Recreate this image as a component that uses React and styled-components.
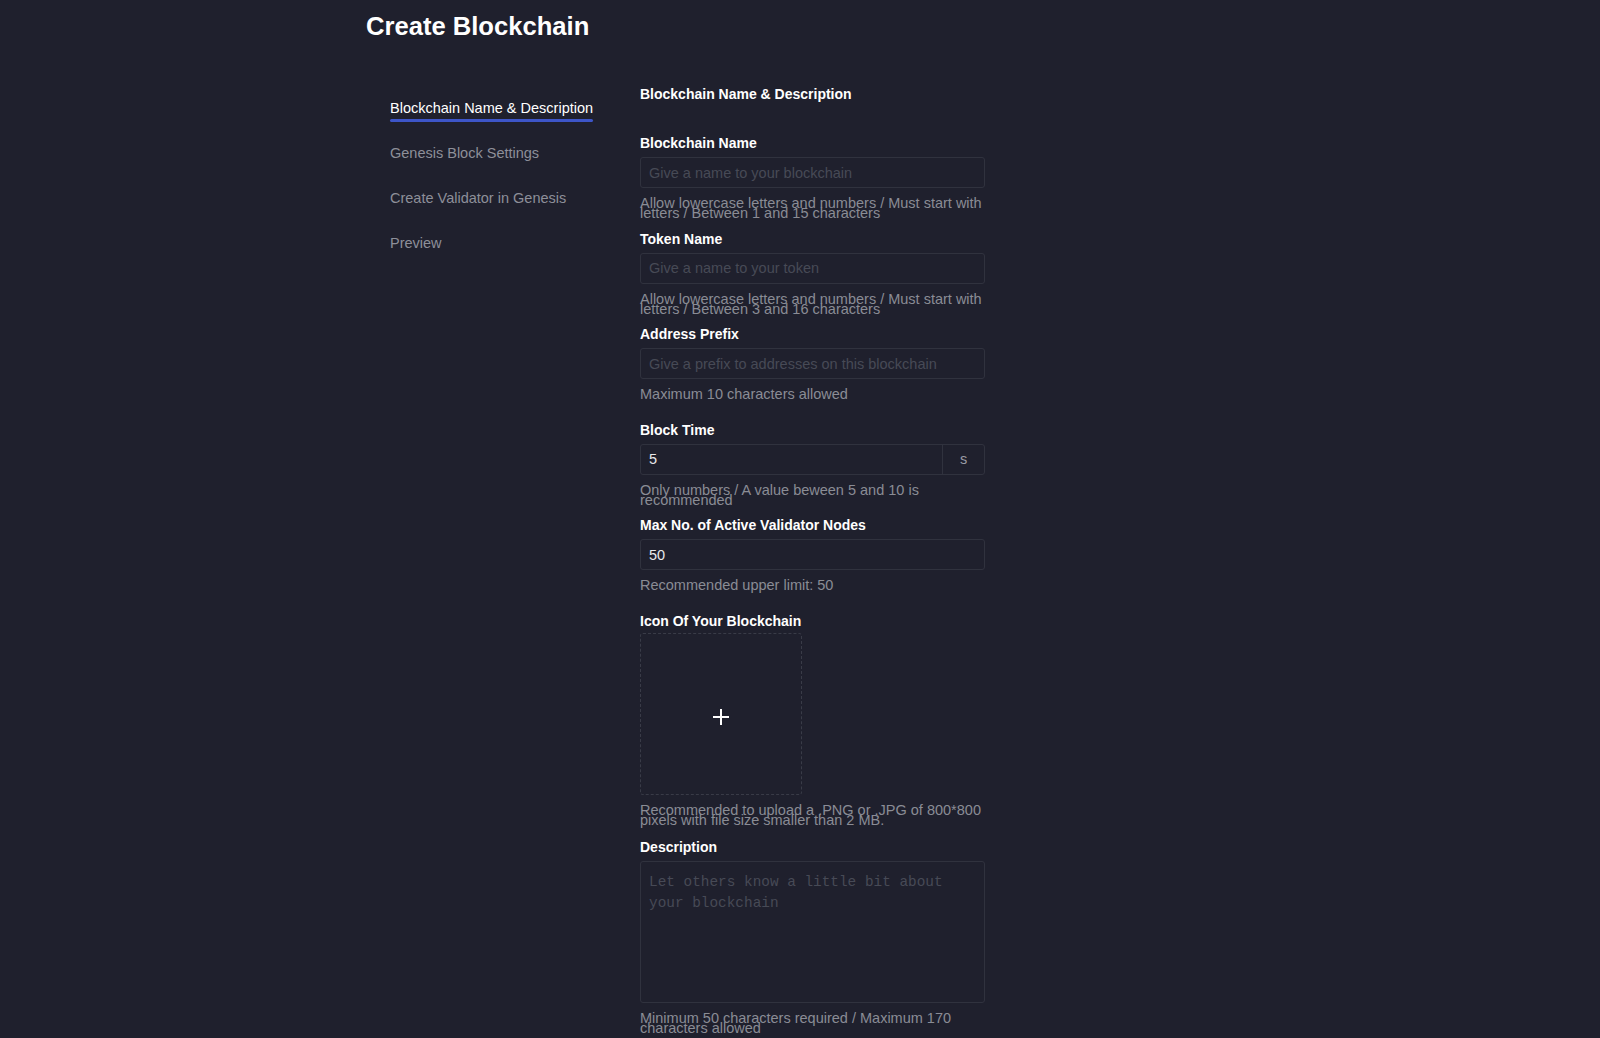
import React from 'react';
import styled, { createGlobalStyle } from 'styled-components';

const GlobalStyle = createGlobalStyle`
	html, body {
		margin: 0;
		padding: 0;
		background: #1f202d;
	}

	body {
		font-family: 'Liberation Sans', Arial, sans-serif;
		color: #fff;
		min-height: 1038px;
	}
`;

const STEPS = [
	'Blockchain Name & Description',
	'Genesis Block Settings',
	'Create Validator in Genesis',
	'Preview',
];

const Page = styled.div`
	width: 868px;
	margin: 0 auto;
`;

const Title = styled.h1`
	margin: 10px 0 0;
	font-size: 25.6px;
	line-height: 32px;
	font-weight: 700;
	color: #fff;
`;

const Body = styled.div`
	display: flex;
	margin-top: 44px;
	padding-left: 24px;
`;

const Sidebar = styled.nav`
	width: 250px;
	padding-top: 14px;
	display: flex;
	flex-direction: column;
	align-items: flex-start;
	gap: 23px;
`;

const Step = styled.div`
	display: flex;
	flex-direction: column;
	font-size: 14.5px;
	line-height: 17px;
	color: ${({ $active }) => ($active ? '#ffffff' : '#8d8f99')};
	cursor: pointer;
`;

const StepLine = styled.span`
	display: block;
	height: 3px;
	margin-top: 2px;
	border-radius: 2px;
	background: ${({ $active }) => ($active ? '#3d55c8' : 'transparent')};
`;

const Main = styled.div`
	width: 345px;
	display: flex;
	flex-direction: column;
`;

const SectionTitle = styled.h2`
	margin: 0 0 32px;
	font-size: 14px;
	line-height: 17px;
	font-weight: 700;
	color: #fff;
`;

const Field = styled.div`
	display: flex;
	flex-direction: column;
	margin-bottom: ${({ $gap }) => $gap || '12.5px'};
`;

const Label = styled.label`
	font-size: 14px;
	line-height: 16px;
	font-weight: 700;
	color: #fff;
	margin-bottom: ${({ $tight }) => ($tight ? '4px' : '6px')};
`;

const InputBox = styled.div`
	display: flex;
	height: 31px;
	box-sizing: border-box;
	border: 1px solid #30323e;
	border-radius: 3px;
`;

const Input = styled.input`
	flex: 1;
	min-width: 0;
	border: none;
	outline: none;
	background: transparent;
	padding: 0 8px;
	font-family: 'Liberation Sans', Arial, sans-serif;
	font-size: 14.5px;
	color: #e8e8ea;

	&::placeholder {
		color: #474a56;
	}
`;

const Addon = styled.span`
	width: 41px;
	display: flex;
	align-items: center;
	justify-content: center;
	border-left: 1px solid #30323e;
	font-size: 14.5px;
	color: #9a9ca5;
`;

const Hint = styled.div`
	margin-top: 10px;
	height: 20px;
	font-size: 14.5px;
	line-height: 10px;
	color: #8a8c95;
`;

const Upload = styled.div`
	width: 162px;
	height: 162px;
	box-sizing: border-box;
	border: 1px dashed #393b47;
	border-radius: 3px;
	display: flex;
	align-items: center;
	justify-content: center;
	padding-top: 6px;
	cursor: pointer;
`;

const TextArea = styled.textarea`
	height: 142px;
	box-sizing: border-box;
	border: 1px solid #30323e;
	border-radius: 3px;
	background: transparent;
	resize: none;
	outline: none;
	padding: 10px 8px 6px;
	font-family: 'Liberation Mono', 'DejaVu Sans Mono', monospace;
	font-size: 14.4px;
	line-height: 21px;
	color: #e8e8ea;

	&::placeholder {
		color: #474a56;
	}
`;

const PlusIcon = () => (
	<svg width="18" height="18" viewBox="0 0 18 18">
		<path d="M9 1v16M1 9h16" stroke="#fff" strokeWidth="2" fill="none" />
	</svg>
);

export default function App() {
	return (
		<>
			<GlobalStyle />
			<Page>
				<Title>Create Blockchain</Title>
				<Body>
					<Sidebar>
						{STEPS.map((step, i) => (
							<Step key={step} $active={i === 0}>
								{step}
								<StepLine $active={i === 0} />
							</Step>
						))}
					</Sidebar>
					<Main>
						<SectionTitle>Blockchain Name &amp; Description</SectionTitle>

						<Field>
							<Label>Blockchain Name</Label>
							<InputBox>
								<Input placeholder="Give a name to your blockchain" />
							</InputBox>
							<Hint>
								Allow lowercase letters and numbers / Must start with letters / Between 1
								and 15 characters
							</Hint>
						</Field>

						<Field>
							<Label>Token Name</Label>
							<InputBox>
								<Input placeholder="Give a name to your token" />
							</InputBox>
							<Hint>
								Allow lowercase letters and numbers / Must start with letters / Between 3
								and 16 characters
							</Hint>
						</Field>

						<Field>
							<Label>Address Prefix</Label>
							<InputBox>
								<Input placeholder="Give a prefix to addresses on this blockchain" />
							</InputBox>
							<Hint>Maximum 10 characters allowed</Hint>
						</Field>

						<Field>
							<Label>Block Time</Label>
							<InputBox>
								<Input defaultValue="5" />
								<Addon>s</Addon>
							</InputBox>
							<Hint>Only numbers / A value beween 5 and 10 is recommended</Hint>
						</Field>

						<Field>
							<Label>Max No. of Active Validator Nodes</Label>
							<InputBox>
								<Input defaultValue="50" />
							</InputBox>
							<Hint>Recommended upper limit: 50</Hint>
						</Field>

						<Field $gap="14.5px">
							<Label $tight>Icon Of Your Blockchain</Label>
							<Upload>
								<PlusIcon />
							</Upload>
							<Hint>
								Recommended to upload a .PNG or .JPG of 800*800 pixels with file size
								smaller than 2 MB.
							</Hint>
						</Field>

						<Field>
							<Label>Description</Label>
							<TextArea placeholder="Let others know a little bit about your blockchain" />
							<Hint>Minimum 50 characters required / Maximum 170 characters allowed</Hint>
						</Field>
					</Main>
				</Body>
			</Page>
		</>
	);
}
